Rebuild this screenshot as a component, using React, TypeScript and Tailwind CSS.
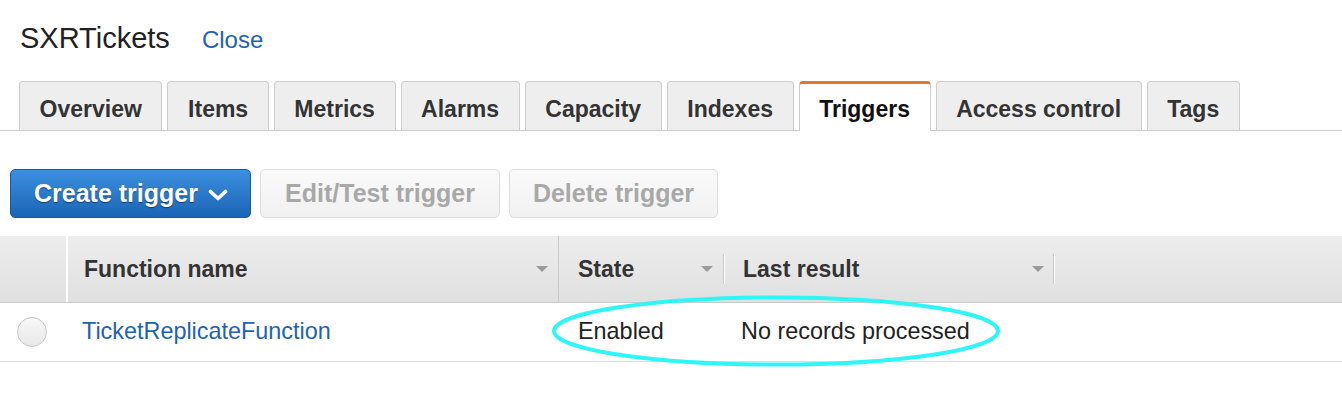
import React from "react";

const tabs = ["Overview", "Items", "Metrics", "Alarms", "Capacity", "Indexes", "Triggers", "Access control", "Tags"];

function Caret() {
  return (
    <svg width="12" height="6" viewBox="0 0 12 6" className="shrink-0">
      <path d="M0 0 H12 L6 6 Z" fill="#9a9a9a" />
    </svg>
  );
}

function ShortDivider() {
  return <div className="h-[30px] w-[2px] shrink-0 border-l border-[#c8c8c8] bg-white" />;
}

export default function App() {
  return (
    <div className="relative h-[407px] w-[1342px] overflow-hidden bg-white font-['Liberation_Sans',Arial,sans-serif]">
      {/* header */}
      <div className="flex h-[81px] items-baseline gap-[32px] pl-[20px] pt-[24px]">
        <span className="text-[29px] leading-[29px] text-[#222]">SXRTickets</span>
        <span className="text-[24px] leading-[29px] text-[#1f62b3]">Close</span>
      </div>

      {/* tabs */}
      <div className="flex items-end gap-[5px] border-b border-[#cccccc] pl-[19px]">
        {tabs.map((t) =>
          t === "Triggers" ? (
            <div
              key={t}
              className="-mb-px h-[50px] rounded-t-[4px] border border-b-0 border-t-[3px] border-[#cccccc] border-t-[#e0782a] bg-white px-[19.6px] pt-[14px] text-[23px] font-bold leading-[23px] text-[#111]"
            >
              {t}
            </div>
          ) : (
            <div
              key={t}
              className="h-[49px] rounded-t-[4px] border border-b-0 border-[#cccccc] bg-[#eeeeee] px-[19.6px] pt-[16px] text-[23px] font-bold leading-[23px] text-[#333]"
            >
              {t}
            </div>
          )
        )}
      </div>

      {/* buttons */}
      <div className="mt-[38px] flex gap-[9px] pl-[10px]">
        <button className="flex h-[49px] w-[241px] items-center gap-[10px] rounded-[5px] border border-[#1a5aa5] bg-linear-to-b from-[#3c90e0] to-[#1b64b5] pl-[23px] text-[25px] font-bold text-white [text-shadow:0_1px_1px_rgba(0,0,0,0.45)]">
          Create trigger
          <svg width="20" height="12" viewBox="0 0 20 12" className="mt-[2px]">
            <polyline points="2.5,2.5 10,9.5 17.5,2.5" fill="none" stroke="white" strokeWidth="3.6" strokeLinecap="round" strokeLinejoin="round" />
          </svg>
        </button>
        <button className="flex h-[49px] w-[240px] items-center justify-center rounded-[5px] border border-[#dedede] bg-linear-to-b from-[#fafafa] to-[#f1f1f1] text-[25px] font-bold text-[#a8a8a8]">
          Edit/Test trigger
        </button>
        <button className="flex h-[49px] w-[209px] items-center justify-center rounded-[5px] border border-[#dedede] bg-linear-to-b from-[#fafafa] to-[#f1f1f1] text-[25px] font-bold text-[#a8a8a8]">
          Delete trigger
        </button>
      </div>

      {/* table header */}
      <div className="mt-[18px] flex h-[67px] border-b border-[#c9c9c9] bg-linear-to-b from-[#ededed] to-[#e0e0e0] text-[23px] font-bold text-[#333]">
        <div className="w-[68px] shrink-0 border-r-2 border-white" />
        <div className="flex w-[491px] shrink-0 items-center border-r border-[#cacaca] pl-[16px] pr-[10px]">
          <span>Function name</span>
          <span className="ml-auto">
            <Caret />
          </span>
        </div>
        <div className="flex w-[166px] shrink-0 items-center pl-[19px]">
          <span>State</span>
          <span className="ml-auto mr-[10px]">
            <Caret />
          </span>
          <ShortDivider />
        </div>
        <div className="flex w-[330px] shrink-0 items-center pl-[18px]">
          <span>Last result</span>
          <span className="ml-auto mr-[9px]">
            <Caret />
          </span>
          <ShortDivider />
        </div>
      </div>

      {/* row */}
      <div className="flex h-[59px] border-b border-[#dddddd] text-[23.4px] text-[#222]">
        <div className="flex w-[68px] shrink-0 items-center pl-[17px]">
          <div className="h-[30px] w-[30px] rounded-full border border-[#c6c6c6] bg-linear-to-b from-[#f7f7f7] to-[#e9e9e9]" />
        </div>
        <div className="flex w-[491px] shrink-0 items-center pl-[14px] text-[#1f62b3]">TicketReplicateFunction</div>
        <div className="flex w-[166px] shrink-0 items-center pl-[19px]">Enabled</div>
        <div className="flex items-center pl-[16px]">No records processed</div>
      </div>

      {/* annotation */}
      <svg className="pointer-events-none absolute left-[551px] top-[295px]" width="452" height="74" viewBox="0 0 452 74">
        <ellipse cx="225" cy="36" rx="222" ry="33.5" fill="none" stroke="#2ff6f6" strokeWidth="4" />
      </svg>
    </div>
  );
}
